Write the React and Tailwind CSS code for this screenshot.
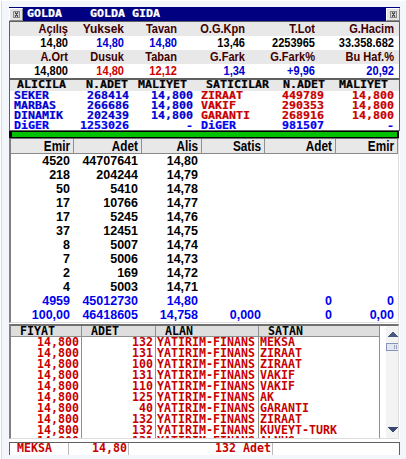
import clsx from "clsx";

const quotes = [
  {
    labels: ["Açılış", "Yuksek", "Tavan", "O.G.Kpn", "T.Lot", "G.Hacim"],
    values: ["14,80", "14,80", "14,80", "13,46", "2253965", "33.358.682"],
    colors: ["text-black", "text-[#0000d0]", "text-[#0000d0]", "text-black", "text-black", "text-black"],
  },
  {
    labels: ["A.Ort", "Dusuk", "Taban", "G.Fark", "G.Fark%", "Bu Haf.%"],
    values: ["14,800", "14,80", "12,12", "1,34", "+9,96", "20,92"],
    colors: ["text-black", "text-[#d00000]", "text-[#d00000]", "text-[#0000d0]", "text-[#0000d0]", "text-[#0000d0]"],
  },
];

const brokers = [
  ["SEKER", "268414", "14,800", "ZIRAAT", "449789", "14,800"],
  ["MARBAS", "266686", "14,800", "VAKIF", "290353", "14,800"],
  ["DINAMIK", "202439", "14,800", "GARANTI", "268916", "14,800"],
  ["DiGER", "1253026", "-", "DiGER", "981507", "-"],
];

const depth = [
  ["4520", "44707641", "14,80"],
  ["218", "204244", "14,79"],
  ["50", "5410", "14,78"],
  ["17", "10766", "14,77"],
  ["17", "5245", "14,76"],
  ["37", "12451", "14,75"],
  ["8", "5007", "14,74"],
  ["7", "5006", "14,73"],
  ["2", "169", "14,72"],
  ["4", "5003", "14,71"],
  ["4959", "45012730", "14,80", "", "0", "0"],
  ["100,00", "46418605", "14,758", "0,000", "0", "0,00"],
];

const trades = [
  ["132", "MEKSA"],
  ["131", "ZIRAAT"],
  ["100", "ZIRAAT"],
  ["131", "VAKIF"],
  ["110", "VAKIF"],
  ["125", "AK"],
  ["40", "GARANTI"],
  ["132", "ZIRAAT"],
  ["132", "KUVEYT-TURK"],
  ["131", "ALNUS"],
];

const mono = "font-['DejaVu_Sans_Mono',monospace] text-[11.63px] font-bold whitespace-pre";

// Terminal fonts: same advance, different glyph heights
function Short({ children, className }) {
  return (
    <span className={clsx(mono, "block origin-center scale-y-[0.84] leading-[10px] [-webkit-text-stroke:0.25px_currentColor]", className)}>
      {children}
    </span>
  );
}

function Tall({ children, className }) {
  return <span className={clsx(mono, "block origin-center scale-y-[1.12] leading-[11px]", className)}>{children}</span>;
}

function CloseBox() {
  return (
    <span className="flex h-[13px] w-[14px] items-center justify-center border border-t-white border-l-white border-r-[#888] border-b-[#888] bg-[#e4e4e4]">
      <svg width="7" height="7" viewBox="0 0 7 7" shapeRendering="crispEdges">
        <path d="M0.5 0.5h6v6h-6z" fill="#d4d4d4" stroke="#888" />
        <path d="M2 1h1v1h1v-1h1v2h-1v1h1v2h-1v-1h-1v1h-1v-2h1v-1h-1z" fill="#555" />
      </svg>
    </span>
  );
}

function TitleBar() {
  return (
    <div className="flex h-[14px] items-end justify-between bg-[#000080] text-white">
      <CloseBox />
      <div className="flex flex-1 self-start pt-[2px] pl-[4px]">
        <Short className="w-[63px]">GOLDA</Short>
        <Short>GOLDA GIDA</Short>
      </div>
      <CloseBox />
    </div>
  );
}

function QuoteRow({ cells, colors, className }) {
  return (
    <div className={clsx("grid h-[14px] grid-cols-[58px_56px_53px_68px_70px_79px] text-right text-[12px] leading-[15px] font-bold whitespace-nowrap", className)}>
      {cells.map((cell, i) => (
        <span key={i} className={clsx("origin-right", colors?.[i], cell !== "Yuksek" && "scale-x-[0.92]")}>{cell}</span>
      ))}
    </div>
  );
}

function Brokers() {
  return (
    <div className="h-[53px] border-t-2 border-r border-b border-l border-[#606060] bg-white">
      <div className="grid h-[11px] grid-cols-[69px_52px_68px_77px_56px_1fr] bg-[#e8e8e8] pl-[7px]">
        {["ALICILA", "N.ADET", "MALIYET", "SATICILAR", "N.ADET", "MALIYET"].map((label, i) => (
          <Short key={i}>{label}</Short>
        ))}
      </div>
      {brokers.map((row, i) => (
        <div key={i} className={clsx("grid h-[10px] grid-cols-[62px_53px_64px_8px_72px_51px_70px] pl-[4px]", i < 3 ? "text-[#0000d0]" : "text-[#0000f0]")}>
          <Short>{row[0]}</Short>
          <Short className="justify-self-end">{row[1]}</Short>
          <Short className="justify-self-end">{row[2]}</Short>
          <span />
          <Short className={i < 3 ? "text-[#c80000]" : ""}>{row[3]}</Short>
          <Short className={clsx("justify-self-end", i < 3 && "text-[#c80000]")}>{row[4]}</Short>
          <Short className={clsx("justify-self-end", i < 3 && "text-[#c80000]")}>{row[5]}</Short>
        </div>
      ))}
    </div>
  );
}

function Depth() {
  const columns = "grid grid-cols-[63px_68px_60px_63px_71px_62px] text-right font-bold";
  return (
    <div className="mr-px h-[185px] border-t border-r border-b border-l-2 border-t-[#707070] border-r-[#ddd] border-b-[#ddd] border-l-[#808080] bg-white">
      <div className={clsx(columns, "h-[15px] border-b border-[#888] bg-[#e8e8e8] text-[14px] leading-[15px]")}>
        {["Emir", "Adet", "Alis", "Satis", "Adet", "Emir"].map((label, i) => (
          <div key={i} className="border-r border-[#909090] pr-[3px]">
            <span className="block origin-right scale-x-[0.84]">{label}</span>
          </div>
        ))}
      </div>
      {depth.map((row, i) => (
        <div key={i} className={clsx(columns, "h-[14px] text-[12.5px] leading-[15px]", i > 9 && "text-[#0000f0]")}>
          {row.map((cell, j) => <span key={j} className="pr-[4px]">{cell}</span>)}
        </div>
      ))}
    </div>
  );
}

function Scrollbar() {
  return (
    <div className="flex w-[12px] shrink-0 flex-col items-start bg-[#f3f3f3] pt-[6px]">
      <svg width="12" height="106" viewBox="0 0 12 106" shapeRendering="crispEdges">
        <path d="M2 5h10l-4.500-5h-1z" fill="#485880" />
        <path d="M0.5 11.5h13v7h-13z" fill="#e2e7f2" stroke="#8794ba" />
        <path d="M8 13h1v4h-1zM10 13h1v4h-1z" fill="#9aa5c5" />
        <path d="M2 95h10l-4.500 5h-1z" fill="#384870" />
      </svg>
    </div>
  );
}

function Trades() {
  const columns = "grid grid-cols-[71px_74px_103px_1fr]";
  return (
    <div className="mt-px mr-px flex h-[115px] overflow-hidden border-t-2 border-r border-b border-l-2 border-t-[#707070] border-r-[#ddd] border-b-[#ddd] border-l-[#808080] bg-white">
      <div className="flex w-[369px] flex-col border-r border-[#909090]">
        <div className={clsx(columns, "h-[11px] shrink-0 border-b border-[#909090] bg-[#dedede]")}>
          {["FIYAT", "ADET", "ALAN", "SATAN"].map((label, i) => (
            <div key={i} className={clsx("h-[10px] pl-[9px]", i < 3 && "border-r border-[#909090]")}>
              <Tall>{label}</Tall>
            </div>
          ))}
        </div>
        <div className={clsx(columns, "min-h-0 flex-1 text-[#c80000]")}>
          <div className="flex flex-col items-end border-r border-[#909090] pr-[2px]">
            {trades.map((_, i) => <Tall key={i}>14,800</Tall>)}
          </div>
          <div className="flex flex-col items-end border-r border-[#909090] pr-[2px]">
            {trades.map((trade, i) => <Tall key={i}>{trade[0]}</Tall>)}
          </div>
          <div className="border-r border-[#909090] pl-[1px]">
            {trades.map((_, i) => <Tall key={i}>YATIRIM-FINANS</Tall>)}
          </div>
          <div className="pl-[1px]">
            {trades.map((trade, i) => <Tall key={i}>{trade[1]}</Tall>)}
          </div>
        </div>
      </div>
      <div className="w-[6px] shrink-0" />
      <Scrollbar />
    </div>
  );
}

export default function App() {
  return (
    <div className="flex h-[459px] w-[406px] flex-col overflow-hidden bg-white pt-px pl-px font-['Liberation_Sans',Arial,sans-serif] text-black">
      <div className="flex h-[458px] flex-col border-l border-[#d5dce8] bg-[#f3f6fb] pt-[6px] pr-[6px] pl-[7px]">
        <TitleBar />
        <div className="h-[57px] border-t border-r border-l border-[#606060] bg-white">
          {quotes.map((quote, i) => (
            <div key={i}>
              <QuoteRow cells={quote.labels} className="bg-[#e8e8e8] text-[#400000]" />
              <QuoteRow cells={quote.values} colors={quote.colors} />
            </div>
          ))}
        </div>
        <Brokers />
        <div className="mr-px flex h-[7px] items-center bg-black pr-[2px] pl-[3px]">
          <div className="h-[5px] flex-1 bg-[#00c000]" />
        </div>
        <div className="bg-white">
          <Depth />
          <Trades />
          <div className="mt-[3px] flex h-[13px] border-t border-r border-l border-[#606060] text-[#c80000]">
            <div className="w-[59px] border-r border-[#bbb] pl-[7px]"><Tall>MEKSA</Tall></div>
            <div className="flex w-[60px] justify-end border-r border-[#bbb] pr-px"><Tall>14,80</Tall></div>
            <div className="flex w-[144px] justify-end border-r border-[#bbb] pr-px"><Tall>132 Adet</Tall></div>
          </div>
        </div>
      </div>
    </div>
  );
}
